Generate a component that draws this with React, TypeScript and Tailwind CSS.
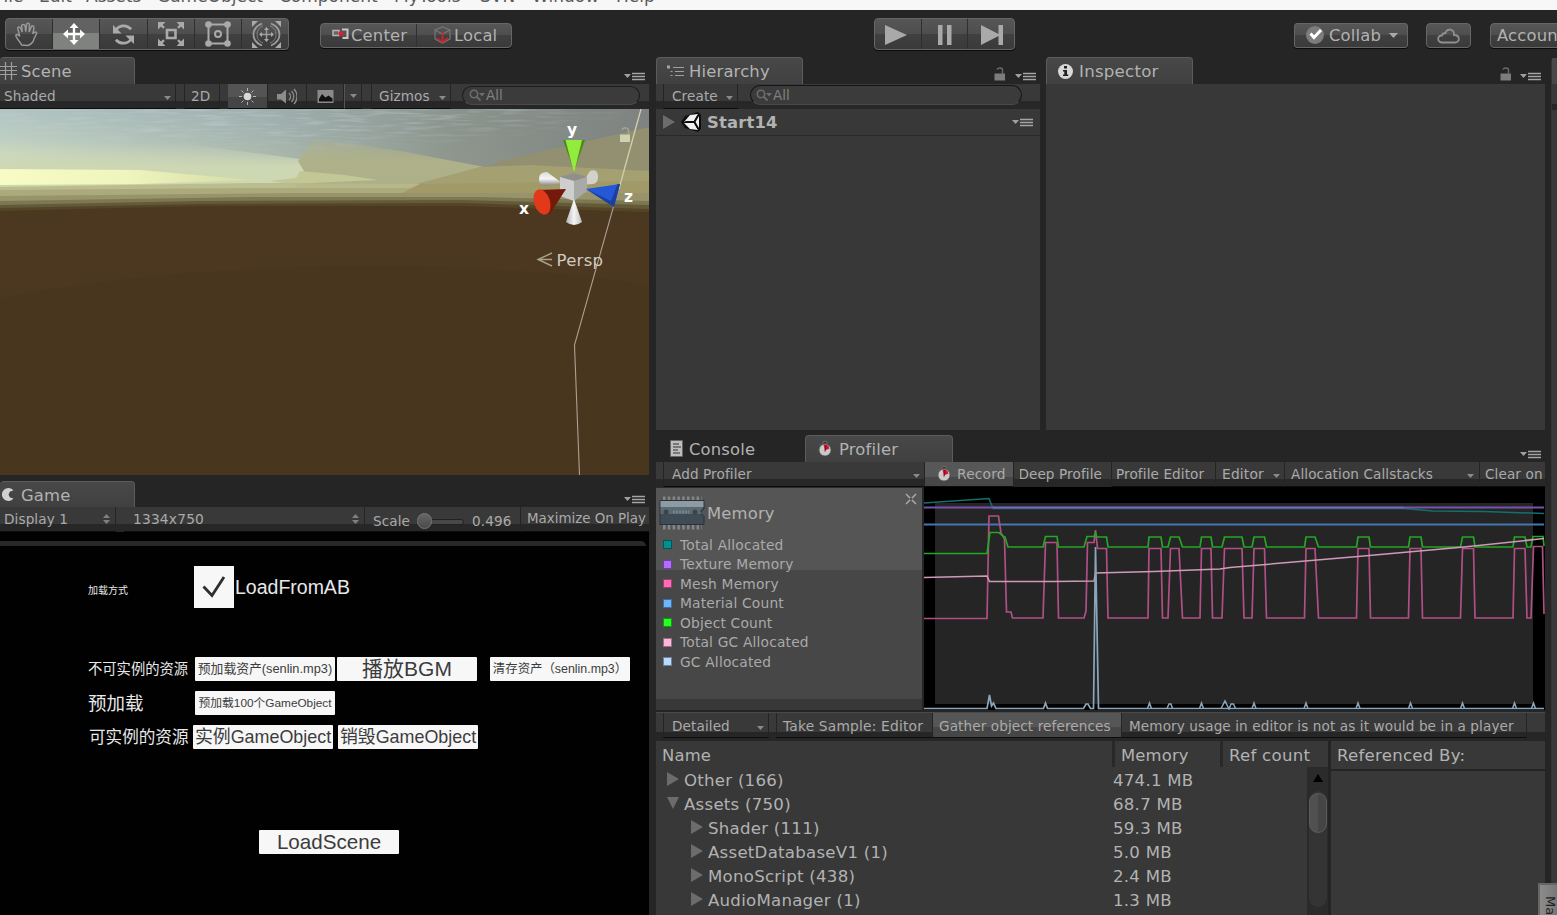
import type { ReactNode } from "react";

type Kids = { children?: ReactNode; className?: string };

const Big = ({ children, className = "", wide }: Kids & { wide?: boolean }) => (
  <span className={`translate-y-px whitespace-nowrap leading-[20px] text-[#b2b2b2] ${wide ? "text-[16.6px] tracking-[0.25px]" : "text-[16.4px] tracking-[0.17px]"} ${className}`}>{children}</span>
);
const Small = ({ children, className = "", wide }: Kids & { wide?: boolean }) => (
  <span className={`whitespace-nowrap leading-[16px] text-[#aaa] ${wide ? "text-[13.8px] tracking-[0.18px]" : "text-[13.6px] tracking-[0.1px]"} ${className}`}>{children}</span>
);

const Caret = ({ className = "" }: { className?: string }) => (
  <svg className={`shrink-0 ${className}`} width="7" height="4" viewBox="0 0 7 4"><path d="M0 0h7L3.5 4z" fill="#8a8a8a" /></svg>
);
const UpDown = ({ className = "" }: { className?: string }) => (
  <svg className={`shrink-0 ${className}`} width="7" height="10" viewBox="0 0 7 10"><path d="M0 4h7L3.5 0zM0 6h7L3.5 10z" fill="#808080" /></svg>
);
const PaneMenu = ({ className = "" }: { className?: string }) => (
  <svg className={`shrink-0 ${className}`} width="21" height="9" viewBox="0 0 21 9">
    <path d="M0 2h7L3.5 6z" fill="#a0a0a0" />
    <path d="M8 1.5h13M8 4.5h13M8 7.5h13" stroke="#a5a5a5" strokeWidth="1.4" />
  </svg>
);
const Lock = ({ className = "" }: { className?: string }) => (
  <svg className={`shrink-0 ${className}`} width="12" height="14" viewBox="0 0 12 14">
    <path d="M0.5 6.5h10.5v7H0.5z" fill="#7c7c7c" />
    <path d="M3 2.5C4 .5 8.500 .5 8.500 3v3.500" fill="none" stroke="#6d6d6d" strokeWidth="1.4" />
  </svg>
);
const Search = ({ className = "" }: { className?: string }) => (
  <svg className={`shrink-0 ${className}`} width="17" height="13" viewBox="0 0 17 13">
    <circle cx="5" cy="5" r="3.7" fill="none" stroke="#6c6c6c" strokeWidth="1.6" />
    <path d="M7.500 7.500l4 4" stroke="#6c6c6c" strokeWidth="1.8" />
    <path d="M10 4h6l-3 3.500z" fill="#6c6c6c" />
  </svg>
);
const SearchText = () => <span className="-mt-px text-[13.5px] leading-[16px] text-[#808080]">All</span>;
const Stopwatch = ({ className = "" }: { className?: string }) => (
  <svg className={`shrink-0 ${className}`} width="14" height="16" viewBox="0 0 14 16">
    <path d="M5 .5h4v2.500H5zM1.500 3.500l2 1.500" stroke="#6a6a6a" fill="#333" />
    <circle cx="7" cy="9" r="6" fill="#c9c9c9" stroke="#555" strokeWidth=".8" />
    <path d="M6.800 9.500L5.500 3.800Q10 2.800 11.500 7.500z" fill="#cc1730" />
    <path d="M7 10.500L8 4" stroke="#8a0a1a" />
  </svg>
);

const Tab = ({ children, className = "" }: Kids) => (
  <div className={`flex h-[27px] shrink-0 items-center rounded-t-[4px] border-t border-r border-[#5c5c5c] bg-gradient-to-b from-[#484848] to-[#404040] ${className}`}>{children}</div>
);
const Bar = ({ children, className = "" }: Kids) => (
  <div className={`flex h-[25px] shrink-0 overflow-hidden bg-[linear-gradient(#393939_0_17px,#272727_17px)] ${className}`}>{children}</div>
);
const Seg = ({ children, className = "" }: Kids) => (
  <div className={`flex h-[25px] shrink-0 items-center overflow-hidden border-r border-[#242424] border-b border-b-[#0c0c0c] ${className}`}>{children}</div>
);

const glossy = "border border-[#666] bg-[linear-gradient(#565656_0%,#4e4e4e_50%,#404040_50%,#3a3a3a_100%)] shadow-[0_1px_0_#0a0a0a]";

const ToolButton = ({ children, active, last }: { children: ReactNode; active?: boolean; last?: boolean }) => (
  <div className={`flex h-full flex-1 items-center justify-center ${last ? "" : "border-r border-[#2f2f2f]"} ${active ? "bg-[linear-gradient(#626262_0_48%,#808280_48%)]" : ""}`}>{children}</div>
);

function TopToolbar() {
  return (
    <div className="flex h-[47px] shrink-0 items-start">
      <div className={`mt-[8px] ml-[5px] flex h-[32px] w-[284px] shrink-0 overflow-hidden rounded-[4px] ${glossy}`}>
        <ToolButton>
          <svg className="-ml-[5px]" width="25" height="25" viewBox="0 0 26 26" fill="none" stroke="#999" strokeWidth="1.500">
            <path d="M8 24c-1-3-6-7-6-10 0-1.500 2-1.500 4 1L4 7c-.5-2 2-2.500 3-.5l1.500 4L8 4c0-2 3-2 3.500 0l.7 6L13 2.500c.3-1.800 3-1.800 3 .2l-.2 7.800L18 5c.7-1.700 3-1 2.800 1l-1.300 6.500c1-2 4-3 4-1 0 2-2.500 4.500-3 7S17 24 14 24.500z" />
          </svg>
        </ToolButton>
        <ToolButton active>
          <svg className="-ml-[4px]" width="22" height="22" viewBox="0 0 22 22" fill="#fff">
            <path d="M11 0l4.500 5H12.200v4.800H17V6.500L22 11l-5 4.500v-3.300h-4.800V17h3.300L11 22l-4.500-5h3.300v-4.800H5v3.300L0 11l5-4.500v3.300h4.800V5H6.500z" />
          </svg>
        </ToolButton>
        <ToolButton>
          <svg width="23" height="21" viewBox="0 0 24 22" fill="none" stroke="#aaa" strokeWidth="2.800">
            <path d="M3.500 7C7 1 15 0 20 5.500M20.500 15C17 21 9 22 4 16.500" />
            <path d="M1 1v9h9zM23 21v-9h-9z" fill="#aaa" stroke="none" />
          </svg>
        </ToolButton>
        <ToolButton>
          <svg width="26" height="24" viewBox="0 0 26 24">
            <path d="M9 8h8.500v8H9z" fill="none" stroke="#aaa" strokeWidth="2.600" />
            <path d="M2 2l4 3.800M24 2l-4 3.800M2 22l4-3.800M24 22l-4-3.800" stroke="#aaa" strokeWidth="2.400" />
            <path d="M0 0h7.500L0 7.500zM26 0h-7.500L26 7.500zM0 24h7.500L0 16.500zM26 24h-7.500l7.500-7.500z" fill="#aaa" />
          </svg>
        </ToolButton>
        <ToolButton>
          <svg width="26" height="26" viewBox="0 0 26 26" fill="none" stroke="#aaa" strokeWidth="2">
            <path d="M3.500 3.500h19v19h-19z" /><circle cx="13" cy="13" r="3" />
            <g fill="#aaa" stroke="none"><circle cx="3.500" cy="3.500" r="3.300" /><circle cx="22.500" cy="3.500" r="3.300" /><circle cx="3.500" cy="22.500" r="3.300" /><circle cx="22.500" cy="22.500" r="3.300" /></g>
          </svg>
        </ToolButton>
        <ToolButton last>
          <svg className="ml-[3px]" width="29" height="27" viewBox="0 0 29 27" fill="none" stroke="#9c9c9c" strokeWidth="1.800">
            <path d="M10 2.500C4 5 1.500 9 1.500 13.500S4 22 10 24.500M19 2.500c6 2.500 8.500 6.500 8.500 11s-2.500 8.500-8.500 11" />
            <path d="M11 5C7 6.500 5 9.500 5 13.500s2 7 6 8.500M18 5c4 1.500 6 4.500 6 8.500s-2 7-6 8.500" strokeWidth="1" opacity=".7" />
            <path d="M14.500 8v11M9 13.500h11" strokeWidth="1.500" />
            <path d="M14.500 6l2.500 3h-5zM14.500 21l2.500-3h-5zM7 13.500l3-2.500v5zM22 13.500l-3-2.500v5zM0 0h6L0 6zM29 0h-6l6 6zM0 27h6l-6-6zM29 27h-6l6-6z" fill="#aaa" stroke="none" />
          </svg>
        </ToolButton>
      </div>

      <div className={`mt-[13px] ml-[31px] flex h-[25px] w-[192px] shrink-0 rounded-[4px] ${glossy}`}>
        <div className="flex w-[96px] items-center border-r border-[#303030] pl-[11px]">
          <svg className="-mt-[3px] shrink-0" width="17" height="12" viewBox="0 0 17 12">
            <path d="M1 2.500h6v5H1z" fill="#666" stroke="#b5b5b5" strokeWidth="1.500" /><path d="M10 1.500h5.500v8.500h-5" fill="#555" stroke="#c8c8c8" strokeWidth="2" /><circle cx="9" cy="5.500" r="2.600" fill="#cf2435" />
          </svg>
          <Big className="-mt-[2px] ml-[2px]">Center</Big>
        </div>
        <div className="flex flex-1 items-center pl-[17px]">
          <svg className="-mt-[2px] shrink-0" width="17" height="18" viewBox="0 0 17 18" fill="none" stroke="#777">
            <path d="M8.500 1L16 4v9l-7.500 4L1 13V4zM1 4l7.500 4L16 4M8.500 8v9" strokeWidth="1.200" />
            <path d="M8.500 6v10M3 12l5.500 4L14 12" stroke="#c3232f" strokeWidth="1.800" />
          </svg>
          <Big className="-mt-[2px] ml-[3px]">Local</Big>
        </div>
      </div>

      <div className={`mt-[8px] ml-[362px] flex h-[32px] w-[141px] shrink-0 rounded-[4px] ${glossy}`}>
        <ToolButton><svg className="mt-[2px] -ml-[4px]" width="22" height="20" viewBox="0 0 22 20"><path d="M0 0l22 10L0 20z" fill="#a9a9a9" /></svg></ToolButton>
        <ToolButton><svg className="mt-[2px]" width="14" height="20" viewBox="0 0 14 20"><path d="M0 0h4.500v20H0zM9 0h4.500v20H9z" fill="#a9a9a9" /></svg></ToolButton>
        <ToolButton last><svg className="mt-[2px] ml-[2px]" width="22" height="20" viewBox="0 0 22 20"><path d="M0 0l17.500 9V0h4.500v20h-4.500v-9L0 20z" fill="#a9a9a9" /></svg></ToolButton>
      </div>

      <div className={`mt-[13px] ml-[279px] flex h-[25px] w-[114px] shrink-0 items-center rounded-[3px] pl-[11px] ${glossy}`}>
        <svg className="-mt-[2px]" width="18" height="18" viewBox="0 0 18 18"><circle cx="9" cy="9" r="9" fill="#7c7c7c" /><path d="M4.500 7.500l3.500 4 7-7.500" fill="none" stroke="#fff" strokeWidth="3" /></svg>
        <Big className="-mt-[2px] ml-[5px]">Collab</Big>
        <svg className="ml-[8px]" width="9" height="5" viewBox="0 0 9 5"><path d="M0 0h9L4.500 5z" fill="#aaa" /></svg>
      </div>
      <div className={`mt-[13px] ml-[18px] flex h-[25px] w-[45px] shrink-0 items-center justify-center rounded-[4px] ${glossy}`}>
        <svg width="23" height="16" viewBox="0 0 23 16" fill="none" stroke="#8f8f8f" strokeWidth="1.800"><path d="M6 14.500C-.5 15 0 7 5 7.500 5.500 5 7 5 8.500 5 10-.5 17.500 1 17 7c6.500 0 6 7.500 1 7.500z" /></svg>
      </div>
      <div className={`mt-[13px] ml-[19px] flex h-[25px] w-[90px] shrink-0 items-center rounded-[4px] pl-[6px] ${glossy}`}><Big className="-mt-[2px]">Account</Big></div>
    </div>
  );
}

function SceneView() {
  return (
    <svg className="block shrink-0" width="649" height="366" viewBox="0 0 649 366">
      <defs>
        <linearGradient id="sky" x1="0" y1="0" x2="0" y2="1">
          <stop offset="0" stopColor="#b0c4c2" /><stop offset=".25" stopColor="#bdcec2" /><stop offset=".42" stopColor="#ccd8be" /><stop offset=".6" stopColor="#d3dab3" /><stop offset="1" stopColor="#c4c892" />
        </linearGradient>
        <linearGradient id="side" x1="0" y1="0" x2="1" y2="0">
          <stop offset="0" stopColor="#8fa0a3" stopOpacity="0" /><stop offset=".4" stopColor="#8d9b9c" stopOpacity=".5" /><stop offset=".7" stopColor="#858d86" stopOpacity=".88" /><stop offset="1" stopColor="#7e8280" />
        </linearGradient>
        <linearGradient id="glow" x1="0" y1="0" x2="1" y2="0">
          <stop offset="0" stopColor="#f6fcc4" /><stop offset=".5" stopColor="#f0f5bd" /><stop offset="1" stopColor="#d5dba8" />
        </linearGradient>
        <linearGradient id="haze" x1="0" y1="0" x2="0" y2="1">
          <stop offset="0" stopColor="#ccd8be" stopOpacity="0" /><stop offset=".5" stopColor="#cdd7b4" /><stop offset="1" stopColor="#cdd7b0" />
        </linearGradient>
        <linearGradient id="mass" x1="0" y1="0" x2="0" y2="1">
          <stop offset="0" stopColor="#aeb189" stopOpacity=".3" /><stop offset=".4" stopColor="#aeb189" /><stop offset="1" stopColor="#acb088" />
        </linearGradient>
        <filter id="streaks" x="0" y="0" width="1" height="1">
          <feTurbulence type="fractalNoise" baseFrequency=".03 .35" numOctaves="2" seed="4" />
          <feColorMatrix values="0 0 0 0 .53 0 0 0 0 .6 0 0 0 0 .62 0 2.200 0 0 -1" />
          <feComposite in2="SourceGraphic" operator="in" />
        </filter>
        <radialGradient id="fade" cx=".25" cy="0" r="1"><stop offset="0" stopColor="#fff" /><stop offset=".45" stopColor="#fff" stopOpacity=".7" /><stop offset=".75" stopColor="#fff" stopOpacity="0" /></radialGradient>
        <linearGradient id="pale" x1="0" y1="0" x2="0" y2="1"><stop offset="0" stopColor="#dcdcdc" /><stop offset=".5" stopColor="#f5f5f5" /><stop offset="1" stopColor="#888" /></linearGradient>
        <linearGradient id="white" x1="0" x2="1"><stop offset="0" stopColor="#b0b0b0" /><stop offset=".5" stopColor="#f5f5f5" /><stop offset="1" stopColor="#bdbdbd" /></linearGradient>
      </defs>
      <path d="M0 0h649v110H0z" fill="url(#sky)" />
      <path d="M0 0h649v75H0z" fill="url(#side)" />
      <path d="M0 34H180L300 50 305 64 290 74 0 80z" fill="url(#haze)" />
      <path d="M315 30L400 42 490 59 649 57V85H290L305 64 298 52z" fill="url(#mass)" />
      <path d="M0 0H649V62H0z" fill="url(#fade)" filter="url(#streaks)" opacity=".75" />
      <path d="M500 52L649 18V62H480z" fill="#929070" />
      <path d="M420 74L480 58 530 56 649 62V90H380z" fill="#a5a072" />
      <path d="M300 62L345 66 378 71 290 75 270 72 296 69z" fill="#c3c795" />
      <path d="M0 60L140 61 252 71 140 75 0 76z" fill="url(#glow)" />
      <path d="M0 78L250 74 420 75H649V110H0z" fill="#b8b98a" opacity=".85" />
      <path d="M0 81L250 79H649V110H0z" fill="#aaaa7c" />
      <path d="M420 75L649 72V110H350z" fill="#a19a68" />
      <path d="M0 87L300 84H649V110H0z" fill="#97946c" />
      <path d="M0 92L250 88H480L649 92V110H0z" fill="#7d7853" />
      <path d="M0 96L200 92 460 91 649 96V110H0z" fill="#635a38" />
      <path d="M0 99L200 95 460 94 649 100V110H0z" fill="#544526" />
      <path d="M0 102L200 97 460 97 649 103V366H0z" fill="#4c3821" />
      <path d="M0 189Q160 159 352 157Q520 156 649 176V366H0z" fill="#49361e" />
      <path d="M641 0L574.500 236 579.500 366" fill="none" stroke="#b39d93" strokeWidth="1.100" />
      <path d="M641 0L619 80" stroke="#cdd2a8" strokeWidth="1.200" />
      <path d="M620 25.500h10v7.500h-10z" fill="#ced2b0" /><path d="M622 21c1-3 6.500-3 6.500 1v3" fill="none" stroke="#a5a98a" strokeWidth="1.500" />
      <path d="M562 74L547 63Q539 63 539 70 539 77 547 76.500z" fill="url(#pale)" />
      <path d="M581 76L590 62Q598 59 598 68 598 74 593 75z" fill="#d2d2cc" />
      <path d="M563 31h22l-11 31z" fill="#4b8a1a" /><path d="M565.500 31h16.500L574.500 62h-1z" fill="#92ec3e" />
      <path d="M560 68l14-4 13 4-13 4z" fill="#8f8f8c" /><path d="M560 68l14 4v20l-14-5z" fill="#cecece" /><path d="M574 72l13-4v14l-13 10z" fill="#a9a9a9" />
      <path d="M566 80L538 81Q542 104 550 105z" fill="#741a0c" />
      <ellipse cx="542" cy="93" rx="8" ry="13" fill="#e03a1b" transform="rotate(-18 542 93)" />
      <path d="M586 80L620 75 614 98z" fill="#2458d6" /><path d="M586 80L614 98 620 75 617.500 75 611 92z" fill="#1b3fa0" />
      <path d="M574 90L566 113Q574 119 582 113z" fill="url(#white)" />
      <g fontFamily="DejaVu Sans, sans-serif" fontWeight="700" fontSize="15.500" fill="#fff"><text x="567" y="26">y</text><text x="519" y="105">x</text><text x="624" y="93">z</text></g>
      <path d="M552 144l-14 6.500 14 6.500M538 150.500h14" fill="none" stroke="#a8a184" strokeWidth="1.400" />
      <text x="556.500" y="157" fontFamily="DejaVu Sans, sans-serif" fontSize="16.500" letterSpacing=".3" fill="#d0ccc4">Persp</text>
    </svg>
  );
}

function ScenePane() {
  return (
    <>
      <div className="flex h-[27px] shrink-0 justify-between">
        <Tab className="w-[135px]">
          <svg className="shrink-0" width="18" height="20" viewBox="0 0 18 20" stroke="#a0a0a0" strokeWidth="1.200"><path d="M5.500 1v18M11.500 1v18M0 5.500h17M0 9.500h17M0 13.500h17" /></svg>
          <Big className="ml-[3px]">Scene</Big>
        </Tab>
        <PaneMenu className="mt-[15px] mr-[4px]" />
      </div>
      <Bar>
        <Seg className="w-[176px] justify-between pr-[4px] pl-[4px]"><Small>Shaded</Small><Caret className="mt-[3px]" /></Seg>
        <Seg className="ml-[8px] w-[36px] border-l pl-[6px]"><Small>2D</Small></Seg>
        <Seg className="ml-[8px] w-[40px] justify-center bg-[linear-gradient(#545454_0_13px,#454545_13px)]">
          <svg width="17" height="17" viewBox="0 0 17 17"><circle cx="8.500" cy="8.500" r="3.800" fill="#d8d8d8" /><path d="M8.500 0v3M8.500 14v3M0 8.500h3M14 8.500h3M2.500 2.500l2 2M12.500 12.500l2 2M14.500 2.500l-2 2M4.500 12.500l-2 2" stroke="#b5b5b5" /></svg>
        </Seg>
        <Seg className="w-[39px] justify-center">
          <svg width="20" height="17" viewBox="0 0 20 17"><path d="M0 6h4l5-4.500v14L4 11.500H0z" fill="#8c8c8c" /><path d="M12 5c2 2 2 5 0 7M14.500 3c3 3 3 8 0 11M17 1c4 4 4 11 0 15" fill="none" stroke="#8c8c8c" strokeWidth="1.300" /></svg>
        </Seg>
        <Seg className="w-[37px] justify-center">
          <svg width="17" height="13" viewBox="0 0 16 13"><path d="M0 0h16v13H0z" fill="#8a8a8a" /><path d="M1.500 9l3-5L8 7.500l3-2 4 3v3h-13.500z" fill="#111" /></svg>
        </Seg>
        <Seg className="w-[18px] justify-center border-l border-l-[#555]"><Caret /></Seg>
        <Seg className="ml-[9px] w-[80px] justify-between border-l pr-[4px] pl-[7px]"><Small>Gizmos</Small><Caret className="mt-[3px]" /></Seg>
        <div className="mt-[2px] ml-[11px] flex h-[19px] w-[178px] items-center rounded-full border border-[#1c1c1c] border-b-[#4a4a4a] bg-[#3b3b3b] pl-[6px]"><Search /><SearchText /></div>
      </Bar>
      <SceneView />
    </>
  );
}

const GameButton = ({ children, className = "" }: Kids) => (
  <div className={`flex h-[24px] w-[140px] shrink-0 items-center justify-center rounded-[1px] bg-[#f7f7f7] leading-[24px] whitespace-nowrap text-[#3c3c3c] ${className}`}>{children}</div>
);
const GameLabel = ({ children, className = "" }: Kids) => <span className={`shrink-0 translate-y-px whitespace-nowrap text-[#e8e8e8] ${className}`}>{children}</span>;

function GamePane() {
  return (
    <>
      <div className="mt-[6px] flex h-[26px] shrink-0 justify-between">
        <Tab className="h-[26px] w-[135px]">
          <svg className="shrink-0" width="15" height="16" viewBox="0 0 15 16"><path d="M13.500 3.500A6.500 6.500 0 1 0 13.500 11.500L10 10.500 8.500 7.500 10 4.500z" fill="#d0d0d0" /></svg>
          <Big className="ml-[6px]">Game</Big>
        </Tab>
        <PaneMenu className="mt-[14px] mr-[4px]" />
      </div>
      <Bar>
        <Seg className="w-[116px] justify-between pr-[5px] pl-[4px]"><Small>Display 1</Small><UpDown /></Seg>
        <Seg className="ml-[8px] w-[241px] justify-between pr-[5px] pl-[9px]"><Small wide>1334x750</Small><UpDown /></Seg>
        <Seg className="w-[156px] pt-[4px] pl-[8px]">
          <Small>Scale</Small>
          <div className="relative ml-[7px] h-[18px] w-[48px]">
            <div className="absolute top-[7px] left-[8px] h-[6px] w-[39px] rounded-full border border-[#222] bg-[#484848]" />
            <div className="absolute top-[1px] left-0 h-[16px] w-[15px] rounded-full border border-[#777] bg-[linear-gradient(#666,#4a4a4a)]" />
          </div>
          <Small className="ml-[7px]">0.496</Small>
        </Seg>
        <Seg className="w-[128px] border-r-0 pl-[6px]"><span className="text-[13.4px] leading-[16px] whitespace-nowrap text-[#aaa]">Maximize On Play</span></Seg>
      </Bar>
      <div className="flex min-h-0 flex-1 flex-col overflow-hidden bg-[#010101] font-['Liberation_Sans','Noto_Sans_CJK_SC',sans-serif]">
        <div className="mt-[9px] h-[5px] w-[646px] shrink-0 rounded-tr-[5px] bg-[#282828]" />
        <div className="mt-[20px] flex h-[42px] shrink-0 items-center pl-[88px]">
          <GameLabel className="mt-[5px] w-[106px] text-[10px]">加载方式</GameLabel>
          <div className="mr-px flex h-[42px] w-[40px] items-center justify-center bg-[#f7f7f7]">
            <svg width="24" height="26" viewBox="0 0 24 26"><path d="M1.500 12.500l8.500 9L22 3" fill="none" stroke="#2e2e2e" strokeWidth="2.800" /></svg>
          </div>
          <GameLabel className="text-[19.5px]">LoadFromAB</GameLabel>
        </div>
        <div className="mt-[49px] flex h-[24px] shrink-0 items-center pl-[88px]">
          <GameLabel className="w-[107px] text-[14.3px]">不可实例的资源</GameLabel>
          <GameButton className="text-[12.8px]">预加载资产(senlin.mp3)</GameButton>
          <GameButton className="ml-[2px] text-[21px]">播放BGM</GameButton>
          <GameButton className="ml-[13px] text-[12.4px]">清存资产（senlin.mp3）</GameButton>
        </div>
        <div className="mt-[10px] flex h-[24px] shrink-0 items-center pl-[88px]">
          <GameLabel className="w-[107px] text-[18.5px]">预加载</GameLabel>
          <GameButton className="text-[11.8px]">预加载100个GameObject</GameButton>
        </div>
        <div className="mt-[10px] flex h-[24px] shrink-0 items-center pl-[89px]">
          <GameLabel className="w-[104px] text-[16.6px]">可实例的资源</GameLabel>
          <GameButton className="text-[17.9px]">实例GameObject</GameButton>
          <GameButton className="ml-[5px] text-[17.9px]">销毁GameObject</GameButton>
        </div>
        <GameButton className="mt-[81px] ml-[259px] text-[20.6px]">LoadScene</GameButton>
      </div>
    </>
  );
}

function HierarchyPane() {
  return (
    <div className="flex w-[384px] shrink-0 flex-col">
      <div className="flex h-[27px] shrink-0">
        <Tab className="w-[147px] border-l pl-[10px]">
          <svg className="shrink-0" width="18" height="13" viewBox="0 0 18 13"><path d="M6 2.500h11M8 6.500h9M8 10.500h9M3.500 6.500h2M3.500 10.500h2" stroke="#a0a0a0" strokeWidth="1.200" /><path d="M0 .5h3v3H0z" fill="#a5a5a5" /></svg>
          <Big className="ml-[4px]">Hierarchy</Big>
        </Tab>
        <Lock className="mt-[10px] ml-[191px]" />
        <PaneMenu className="mt-[15px] ml-[9px]" />
      </div>
      <Bar>
        <Seg className="ml-[7px] w-[75px] justify-between border-l pr-[4px] pl-[8px]"><Small>Create</Small><Caret className="mt-[3px]" /></Seg>
        <div className="mt-[1px] ml-[12px] flex h-[20px] w-[272px] items-center rounded-full border border-[#141414] border-b-[#4a4a4a] bg-[#3b3b3b] pl-[5px]"><Search /><SearchText /></div>
      </Bar>
      <div className="flex min-h-0 flex-1 flex-col bg-[#383838]">
        <div className="flex h-[27px] shrink-0 items-center border-b border-[#282828] pl-[7px]">
          <svg width="12" height="14" viewBox="0 0 12 14"><path d="M0 0l12 7L0 14z" fill="#6c6c6c" /></svg>
          <svg className="ml-[6px]" width="21" height="20" viewBox="0 0 21 20">
            <path d="M0 10L4 4 17 0 20 3V17L17 20 4 16z" fill="#0d0d0d" />
            <path d="M3 10l6-7 8-1-4 7h-7zM3 11l6 6 8 1-4-7zM14.500 10l3.500-6v12z" fill="#f2f2f2" /><path d="M4 10.200h9M13 10L17 3M13 10l4 7" stroke="#0d0d0d" strokeWidth="1.200" />
          </svg>
          <Big className="ml-[5px] flex-1 font-bold">Start14</Big>
          <PaneMenu className="mr-[7px]" />
        </div>
      </div>
    </div>
  );
}

function InspectorPane() {
  return (
    <div className="ml-[6px] flex w-[499px] shrink-0 flex-col">
      <div className="flex h-[27px] shrink-0">
        <Tab className="w-[147px] border-l pl-[10px]">
          <svg className="shrink-0" width="17" height="17" viewBox="0 0 17 17"><circle cx="8.500" cy="8.500" r="7.500" fill="#d9d9d9" /><path d="M7 3h3v2.500H7zM6 7h4v4.500h1.200v1.500H6v-1.500h1.300V8.500H6z" fill="#222" /></svg>
          <Big className="ml-[5px]" wide>Inspector</Big>
        </Tab>
        <Lock className="mt-[10px] ml-[307px]" />
        <PaneMenu className="mt-[15px] ml-[8px]" />
      </div>
      <div className="flex-1 bg-[#383838]" />
    </div>
  );
}

const legend = [
  { name: "Total Allocated", color: "bg-[#009090]" },
  { name: "Texture Memory", color: "bg-[#b46cff]" },
  { name: "Mesh Memory", color: "bg-[#ff6cb6]" },
  { name: "Material Count", color: "bg-[#6cb6ff]" },
  { name: "Object Count", color: "bg-[#24ff24]" },
  { name: "Total GC Allocated", color: "bg-[#ffb6db]" },
  { name: "GC Allocated", color: "bg-[#b6dbff]" },
];

const pulses = [
  [224, 225, 237, 238.5], [244, 246.5, 255, 258.5], [276, 277.5, 287, 288.5], [298, 300.5, 318, 320], [328, 330, 340.5, 342.5],
  [380.5, 382, 391, 394.5], [432.5, 434, 445, 446.5], [484.5, 486, 497, 498.5], [536.5, 538.5, 549.5, 551], [589, 590.5, 601, 603],
];
const pulsePath = (top: number, base: number) => pulses.map(([a, b, c, d]) => `L${a} ${base}L${b} ${top}L${c} ${top}L${d} ${base}`).join("");
const objectCount = `M0 66.500H63L66 45.500H75L79 49 81 50 84 60H119L121.500 49.500H133L134.500 60H160L163 49.500H170L171.500 46 173 50H182.500L184 60${pulsePath(50, 60)}L607 60 609 49.500H619L620 59`;
const meshMemory = `M0 131.500H63L65 29H74.500L77 46 80.500 52 82.500 125H87L88.500 131H119L121.500 55.500H133L134.500 131H160L162 124 163.500 55.500H170L171.500 43 173.500 61.500H182.500L184 131${pulsePath(61.5, 131)}L607 131 609.500 59.500H618.500L620 127`;
const gcBumps = [225.5, 277.5, 330, 382, 434, 486.5, 538.5, 590.5, 609.5];
const gcTail = gcBumps.map((x) => `M${x - 2} 221.500L${x} 216 ${x + 2} 221.500`).join("");

function Chart() {
  return (
    <svg className="block shrink-0" width="621" height="223" viewBox="0 0 621 223" fill="none" strokeWidth="1.500">
      <path d="M0 0h621v223H0z" fill="#000" />
      <path d="M11 16h598v201H11z" fill="#252525" />
      <path d="M0 16L65 11.500 69 21.500H480L509 24 560 24.500 620 26.500" stroke="#12706e" />
      <path d="M0 20.500H620" stroke="#7a52ae" strokeWidth="2" />
      <path d="M69 20.500H480" stroke="#6a6cc0" strokeWidth="1.500" />
      <path d="M0 37.500H620" stroke="#4477b3" strokeWidth="2" />
      <path d={meshMemory} stroke="#b04f85" strokeWidth="1.700" />
      <path d={objectCount} stroke="#22a822" strokeWidth="1.700" />
      <path d="M0 90.500L63 89 65.500 94.500 130 94.500 170 94 171.500 86 230 84.500 296 82 306 80.500 434 69.500 540 60 620 51.500" stroke="#cf9ab8" />
      <path d="M0 221.500H63L65.500 208 67.500 219 69.500 216 72 221.500H119.500L121.500 216 123.500 221.500H159.500L162 217H164L166.500 221.500H169.500L171.500 60 174.500 221.500H620" stroke="#8aa6bd" strokeWidth="1.700" />
      <path d="M243 221.500L245 217H247L248.500 221.500M297 221.500L301 214 305 222 307 217H309.500L311.500 221.500" stroke="#8aa6bd" />
      <path d={gcTail} stroke="#8aa6bd" />
    </svg>
  );
}

const rows = [
  { name: "Other (166)", size: "474.1 MB", pad: "pl-[11px]", open: false },
  { name: "Assets (750)", size: "68.7 MB", pad: "pl-[11px]", open: true },
  { name: "Shader (111)", size: "59.3 MB", pad: "pl-[35px]", open: false },
  { name: "AssetDatabaseV1 (1)", size: "5.0 MB", pad: "pl-[35px]", open: false },
  { name: "MonoScript (438)", size: "2.4 MB", pad: "pl-[35px]", open: false },
  { name: "AudioManager (1)", size: "1.3 MB", pad: "pl-[35px]", open: false },
];

function ProfilerPane() {
  return (
    <div className="flex min-h-0 w-[889px] flex-1 flex-col">
      <div className="mt-[5px] flex h-[27px] shrink-0">
        <div className="flex w-[149px] items-center pl-[14px]">
          <svg width="14" height="17" viewBox="0 0 14 17"><path d="M.5.5h12v16H.5z" fill="#bdbdbd" stroke="#666" /><path d="M3 4h6M3 7h8M3 10h5M3 13h7" stroke="#333" strokeWidth="1.200" /></svg>
          <Big className="ml-[5px]">Console</Big>
        </div>
        <Tab className="w-[148px] border-l pl-[12px]"><Stopwatch /><Big className="ml-[7px]">Profiler</Big></Tab>
        <PaneMenu className="mt-[15px] ml-[567px]" />
      </div>
      <Bar>
        <Seg className="ml-[7px] w-[262px] justify-between border-l pr-[4px] pl-[8px]"><Small>Add Profiler</Small><Caret className="mt-[3px]" /></Seg>
        <Seg className="w-[89px] bg-[linear-gradient(#575757_0_15px,#474747_15px)] pl-[12px]"><Stopwatch /><Small className="ml-[6px]" wide>Record</Small></Seg>
        <div className="flex h-[24px] w-[98px] shrink-0 items-center justify-end overflow-hidden border-r border-[#242424] pr-[9px]"><div className="flex w-[82px] justify-end overflow-hidden"><Small>Deep Profile</Small></div></div>
        <Seg className="w-[104px] pl-[4px]"><Small>Profile Editor</Small></Seg>
        <Seg className="w-[69px] justify-between pr-[4px] pl-[6px]"><Small wide>Editor</Small><Caret className="mt-[3px]" /></Seg>
        <Seg className="w-[195px] justify-between pr-[5px] pl-[6px]"><Small>Allocation Callstacks</Small><Caret className="mt-[3px]" /></Seg>
        <Seg className="w-[65px] border-r-0 pl-[5px]"><Small>Clear on</Small></Seg>
      </Bar>
      <div className="flex h-[223px] shrink-0">
        <div className="flex w-[266px] shrink-0 flex-col border-t border-[#2a2a2a] bg-[linear-gradient(#555_0_82px,#474747_82px_211px,#383838_211px)]">
          <div className="flex h-[47px] items-start">
            <svg className="mt-[8px] ml-[3px] shrink-0" width="47" height="34" viewBox="0 0 47 34">
              <path d="M4 3h39M4 31h39" stroke="#858585" strokeWidth="5" strokeDasharray="2.500 2.300" />
              <path d="M1 4.500h44v8l-3.500 4 3.500 4v8H1z" fill="#3f4b55" stroke="#28323a" /><path d="M1.500 5h43v6H1.500z" fill="#8d9ba3" /><path d="M1.500 11h43l-3.500 4 1.500 3h-41z" fill="#5b6973" />
              <circle cx="7" cy="16" r="2.500" fill="#39444d" /><circle cx="36" cy="16" r="2.500" fill="#39444d" /><path d="M14 16h16" stroke="#75858f" strokeWidth="3" strokeDasharray="2 1" />
            </svg>
            <Big className="mt-[15px] ml-[1px] flex-1">Memory</Big>
            <svg className="mt-[5px] mr-[5px]" width="12" height="12" viewBox="0 0 12 12"><path d="M1 1l10 10M11 1L1 11" stroke="#aaa" strokeWidth="1.500" /><path d="M4.500 6l1.500-1.500 1.500 1.500-1.500 1.500z" fill="#444" /></svg>
          </div>
          {legend.map((item) => (
            <div key={item.name} className="flex h-[19.5px] shrink-0 items-center pl-[7px]">
              <div className={`h-[9px] w-[9px] border border-black/40 ${item.color}`} />
              <Small className="ml-[8px]" wide>{item.name}</Small>
            </div>
          ))}
        </div>
        <div className="w-[2px] shrink-0 bg-[#252525]" />
        <Chart />
      </div>
      <div className="mt-[2px] flex h-[29px] shrink-0 border-t border-[#4a4a4a] bg-[linear-gradient(#393939_0_19px,#262626_19px)]">
        <Seg className="ml-[7px] w-[106px] justify-between border-l pt-[2px] pr-[4px] pl-[8px]"><Small>Detailed</Small><Caret className="mt-[3px]" /></Seg>
        <Seg className="ml-[7px] w-[157px] border-l pt-[2px] pl-[6px]"><Small wide>Take Sample: Editor</Small></Seg>
        <Seg className="w-[189px] bg-[linear-gradient(#565656_0_14px,#464646_14px)] pt-[2px] pl-[6px]"><Small>Gather object references</Small></Seg>
        <Seg className="w-[405px] pt-[2px] pl-[7px]"><Small>Memory usage in editor is not as it would be in a player</Small></Seg>
      </div>
      <div className="flex min-h-0 flex-1">
        <div className="flex w-[672px] shrink-0 flex-col bg-[#383838]">
          <div className="flex h-[26px] shrink-0 items-center">
            <div className="flex h-full w-[459px] items-center border-r-3 border-[#282828] pt-[2px] pl-[6px]"><Big>Name</Big></div>
            <div className="flex h-full w-[108px] items-center border-r-3 border-[#282828] pt-[2px] pl-[6px]"><Big>Memory</Big></div>
            <div className="flex h-full flex-1 items-center pt-[2px] pl-[6px]"><Big wide>Ref count</Big></div>
          </div>
          <div className="flex min-h-0 flex-1 overflow-hidden">
            <div className="flex w-[651px] shrink-0 flex-col">
              {rows.map((r) => (
                <div key={r.name} className="flex h-[24px] shrink-0 items-center">
                  <div className={`flex w-[457px] items-center ${r.pad}`}>
                    <svg width="12" height="14" viewBox="0 0 12 14">{r.open ? <path d="M0 1h12L6 13z" fill="#6c6c6c" /> : <path d="M0 0l12 7L0 14z" fill="#6c6c6c" />}</svg>
                    <Big className="mt-[2px] ml-[5px]" wide>{r.name}</Big>
                  </div>
                  <Big className="mt-[2px]" wide>{r.size}</Big>
                </div>
              ))}
            </div>
            <div className="flex w-[21px] flex-col items-center border-l border-[#282828] bg-[#2b2b2b]">
              <svg className="mt-[7px]" width="10" height="8" viewBox="0 0 10 8"><path d="M5 0l5 8H0z" fill="#000" /></svg>
              <div className="mt-[9px] flex min-h-0 w-[18px] flex-1 flex-col items-center rounded-full bg-[#343434]">
                <div className="mt-[2px] h-[40px] w-[18px] rounded-full border border-[#5c5c5c] bg-[linear-gradient(90deg,#505050_0_50%,#454545_50%)]" />
              </div>
              <div className="h-[8px]" />
            </div>
          </div>
        </div>
        <div className="flex min-w-0 flex-1 flex-col border-l-3 border-[#242424] bg-[#383838]">
          <div className="flex h-[30px] shrink-0 items-center border-b-2 border-[#242424] pl-[6px]"><Big wide>Referenced By:</Big></div>
        </div>
      </div>
    </div>
  );
}

const menus = [
  { name: "File", w: "w-[44px]" }, { name: "Edit", w: "w-[47px]" }, { name: "Assets", w: "w-[71px]" }, { name: "GameObject", w: "w-[122px]" },
  { name: "Component", w: "w-[115px]" }, { name: "MyTools", w: "w-[86px]" }, { name: "SVN", w: "w-[52px]" }, { name: "Window", w: "w-[84px]" }, { name: "Help", w: "w-[50px]" },
];

export default function App() {
  return (
    <div className="relative flex h-[915px] w-[1557px] flex-col overflow-hidden bg-[#252525] font-['DejaVu_Sans','Noto_Sans_CJK_SC',sans-serif]">
      <div className="flex h-[10px] shrink-0 items-end overflow-hidden bg-[#f7f7f7] pb-[4px]">
        {menus.map((m) => (
          <span key={m.name} className={`shrink-0 -translate-x-[5px] text-[17px] leading-[20px] whitespace-nowrap text-[#5a5a5a] ${m.w}`}>{m.name}</span>
        ))}
      </div>
      <TopToolbar />
      <div className="flex min-h-0 flex-1">
        <div className="flex w-[649px] shrink-0 flex-col"><ScenePane /><GamePane /></div>
        <div className="ml-[7px] flex w-[889px] shrink-0 flex-col">
          <div className="flex h-[373px] shrink-0"><HierarchyPane /><InspectorPane /></div>
          <ProfilerPane />
        </div>
        <div className="mt-[1px] ml-[6px] flex flex-1 flex-col rounded-tl-[3px] border-l border-[#333] bg-[#383838]"><div className="h-[26px] bg-[#484848]" /><div className="mt-[20px] h-[6px] bg-[#262626]" /></div>
      </div>
      <div className="absolute right-0 bottom-0 flex h-[32px] w-[19px] items-end overflow-hidden border-t-2 border-l-2 border-[#666] bg-[linear-gradient(90deg,#8c8c8c,#777)]">
        <span className="ml-[3px] text-[13px] leading-[14px] text-[#222] [writing-mode:vertical-rl]">Ma</span>
      </div>
    </div>
  );
}
